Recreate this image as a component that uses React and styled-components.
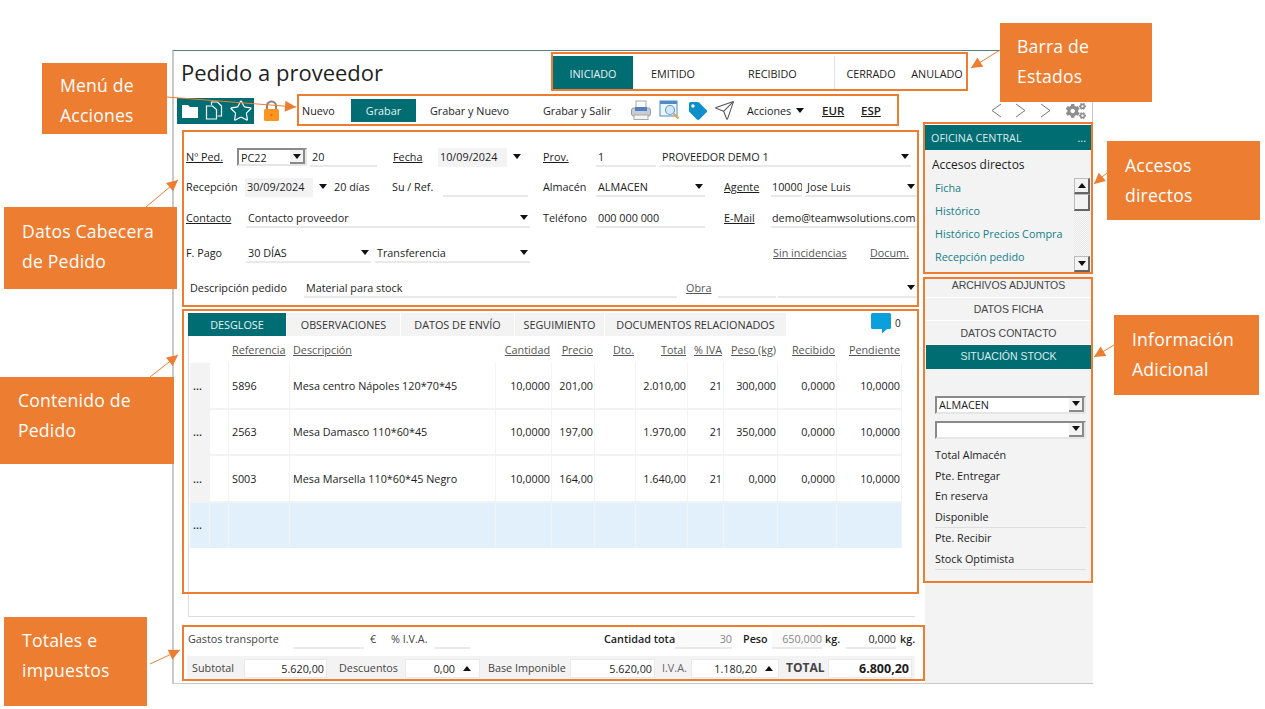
// Pedido a proveedor - annotated slide of the order form
import React from 'react';
import styled, { createGlobalStyle } from 'styled-components';
import { Star, Send } from 'lucide-react';
import { FaTag, FaCogs } from 'react-icons/fa';

const teal = '#006d73';
const orange = '#ed7d31';
const soft = '#f3f3f3';
const line = '#e9e9e9';

const GlobalStyle = createGlobalStyle`
  html, body { margin: 0; padding: 0; background: #fff; }
  body { font-family: 'Open Sans', 'Noto Sans', Arial, sans-serif; color: #1c1c1c; }
  * { box-sizing: border-box; }
`;

// --- Slide canvas ---
const Slide = styled.div`
  position: relative;
  width: 1265px;
  height: 709px;
  overflow: hidden;
  background: #fff;
`;

const Win = styled.div`
  position: absolute;
  left: 172px;
  top: 50px;
  width: 921px;
  height: 634px;
  background: #fff;
  border: 1px solid #c9c9c9;
  border-left-width: 2px;
  border-top: 1px solid #5b7d7d;
  display: flex;
  flex-direction: column;
  font-size: 10.8px;
`;

// --- Title + states ---
const TitleRow = styled.div`
  height: 45px;
  flex: none;
  display: flex;
  align-items: flex-start;
`;
const Title = styled.h1`
  margin: 6px 0 0 7px;
  width: 372px;
  font-size: 22px;
  font-weight: 400;
  line-height: 30px;
  color: #1f1f1f;
`;
const StateTab = styled.div`
  width: ${p => p.$w}px;
  height: 34px;
  margin-top: 5px;
  display: flex;
  align-items: center;
  justify-content: ${p => (p.$left ? 'flex-start' : 'center')};
  padding-left: ${p => p.$left || 0}px;
  background: ${p => (p.$on ? teal : 'transparent')};
  color: ${p => (p.$on ? '#e8f2f2' : '#222')};
  border-left: ${p => (p.$sep ? '1px solid #e3e3e3' : 'none')};
`;

// --- Toolbar ---
const ToolRow = styled.div`
  height: 29px;
  flex: none;
  display: flex;
  align-items: center;
`;
const TealIcons = styled.div`
  width: 77px;
  height: 26px;
  margin-left: 3px;
  background: ${teal};
  display: flex;
  align-items: center;
  justify-content: space-between;
  padding: 0 1px 0 4px;
`;
const LockWrap = styled.div`
  margin: 0 0 0 8px;
  width: 19px;
  height: 24px;
`;
const ToolText = styled.span`
  flex: none;
  width: ${p => p.$w}px;
  margin-left: ${p => p.$ml || 0}px;
  font-weight: ${p => (p.$b ? 600 : 400)};
  font-size: ${p => (p.$b ? 11.5 : 10.8)}px;
  text-decoration: ${p => (p.$u ? 'underline' : 'none')};
  white-space: nowrap;
`;
const ToolBtn = styled.div`
  flex: none;
  width: 65px;
  height: 23px;
  background: ${teal};
  color: #e8f2f2;
  display: flex;
  align-items: center;
  justify-content: center;
`;
const ToolIcon = styled.div`
  flex: none;
  margin-left: ${p => p.$ml || 0}px;
  width: 22px;
  height: 22px;
  display: flex;
  align-items: center;
  justify-content: center;
  & > svg { flex: none; }
`;
const Caret = styled.i`
  flex: none;
  display: inline-block;
  width: 0;
  height: 0;
  margin-left: ${p => p.$ml || 0}px;
  border-left: 4.5px solid transparent;
  border-right: 4.5px solid transparent;
  border-top: ${p => (p.$up ? '0' : '5px solid #111')};
  border-bottom: ${p => (p.$up ? '5px solid #111' : '0')};
`;

// --- Main columns ---
const Main = styled.div`
  flex: 1;
  display: flex;
  min-height: 0;
`;
const LeftCol = styled.div`
  width: 751px;
  flex: none;
  display: flex;
  flex-direction: column;
`;
const RightCol = styled.div`
  flex: 1;
  background: ${soft};
  display: flex;
  flex-direction: column;
`;

// --- Header form ---
const Form = styled.div`
  height: 181px;
  flex: none;
  padding: 23px 0 0 12px;
  display: flex;
  flex-direction: column;
`;
const FormRow = styled.div`
  height: ${p => p.$h}px;
  flex: none;
  display: flex;
  align-items: flex-start;
`;
const Label = styled.span`
  flex: none;
  width: ${p => p.$w}px;
  margin-left: ${p => p.$ml || 0}px;
  line-height: 18px;
  text-decoration: ${p => (p.$u ? 'underline' : 'none')};
  white-space: nowrap;
  color: ${p => p.$c || '#1c1c1c'};
  font-weight: ${p => (p.$b ? 600 : 400)};
`;
const Input = styled.div`
  flex: none;
  width: ${p => p.$w}px;
  margin-left: ${p => p.$ml || 0}px;
  height: 19px;
  padding: 0 ${p => (p.$caret ? 2 : 0)}px 0 ${p => p.$pl ?? 2}px;
  border-bottom: 2px solid ${p => (p.$date ? 'transparent' : line)};
  background: ${p => (p.$date ? soft : p.$shade ? '#fafafa' : 'transparent')};
  color: ${p => (p.$shade ? '#888' : 'inherit')};
  display: flex;
  align-items: center;
  justify-content: ${p => (p.$end ? 'flex-end' : 'space-between')};
  line-height: 17px;
  white-space: nowrap;
  overflow: hidden;
`;
const Combo = styled.div`
  flex: none;
  width: ${p => p.$w}px;
  height: 18px;
  margin-left: ${p => p.$ml || 0}px;
  background: #fff;
  border: 2px solid;
  border-color: #8a8a8a #e6e6e6 #e6e6e6 #8a8a8a;
  display: flex;
  align-items: center;
  justify-content: space-between;
  padding-left: 2px;
  white-space: nowrap;
`;
const ComboBtn = styled.span`
  width: 15px;
  height: 14px;
  background: ${soft};
  border-right: 2px solid #8a8a8a;
  border-bottom: 2px solid #8a8a8a;
  display: flex;
  align-items: center;
  justify-content: center;
`;
const CaretGap = styled(Caret)`
  margin-top: 6px;
  margin-left: 6px;
`;

// --- Tabs + table ---
const Tabs = styled.div`
  height: 23px;
  flex: none;
  margin: 7px 0 0 14px;
  display: flex;
  gap: 1px;
`;
const Tab = styled.div`
  width: ${p => p.$w}px;
  background: ${p => (p.$on ? teal : soft)};
  color: ${p => (p.$on ? '#e8f2f2' : '#333')};
  display: flex;
  align-items: center;
  justify-content: center;
  white-space: nowrap;
`;
const Comment = styled.div`
  margin-left: 84px;
  display: flex;
  align-items: flex-start;
  gap: 4px;
  line-height: 21px;
  font-size: 10px;
`;
const TableFrame = styled.div`
  height: 281px;
  flex: none;
  margin: 0 10px 0 14px;
  border-left: 1px solid #dcdcdc;
  border-bottom: 1px solid #dcdcdc;
  padding: 3px 0 0 1px;
`;
const gridCols = '20px 19px 61px 206px 56px 43px 41px 52px 36px 54px 59px 65px';
const THead = styled.div`
  display: grid;
  grid-template-columns: ${gridCols};
  width: 712px;
  height: 24px;
  padding-bottom: 4px;
  color: #555;
  align-items: center;
`;
const Th = styled.span`
  text-decoration: underline;
  text-align: ${p => (p.$left ? 'left' : 'right')};
  padding: ${p => (p.$left ? '0 0 0 3px' : '0 2px 0 0')};
  white-space: nowrap;
`;
const TRow = styled.div`
  display: grid;
  grid-template-columns: ${gridCols};
  width: 712px;
  height: ${p => (p.$sel ? 45 : 46.5)}px;
  background: ${p => (p.$sel ? '#e2f0fc' : 'transparent')};
`;
const Td = styled.div`
  display: flex;
  align-items: center;
  justify-content: ${p => (p.$left ? 'flex-start' : 'flex-end')};
  padding: ${p => (p.$left ? '0 0 0 3px' : '0 1px 0 0')};
  border-right: 1px solid ${soft};
  border-bottom: 2px solid ${p => (p.$sel ? 'transparent' : soft)};
  white-space: nowrap;
`;
const DotCell = styled(Td)`
  background: ${p => (p.$sel ? 'transparent' : soft)};
  justify-content: center;
  padding: 0 4px 0 0;
  font-weight: 600;
`;

// --- Totals ---
const Totals = styled.div`
  margin: 8px 10px 0 13px;
  display: flex;
  flex-direction: column;
`;
const TotRow = styled.div`
  height: ${p => p.$h}px;
  flex: none;
  display: flex;
  align-items: center;
  padding-bottom: ${p => (p.$bg ? 0 : 3)}px;
  background: ${p => (p.$bg ? soft : 'transparent')};
`;
const NumField = styled.div`
  flex: none;
  width: ${p => p.$w}px;
  margin-left: ${p => p.$ml || 0}px;
  height: 19px;
  padding-right: ${p => p.$pr ?? 2}px;
  display: flex;
  align-items: center;
  justify-content: flex-end;
  gap: 8px;
  background: #fff;
  border: 1px solid ${line};
  font-weight: ${p => (p.$b ? 700 : 400)};
  font-size: ${p => (p.$b ? 12.5 : 10.8)}px;
`;
const TotalLabel = styled(Label)`
  font-weight: 700;
  font-size: 12px;
`;

// --- Right panel ---
const OfficeBar = styled.div`
  height: 25px;
  flex: none;
  background: ${teal};
  color: #dcecec;
  display: flex;
  align-items: center;
  justify-content: space-between;
  padding: 0 7px 0 6px;
`;
const Shortcuts = styled.div`
  height: 124px;
  flex: none;
  display: flex;
`;
const ShortList = styled.div`
  flex: 1;
  padding: 6px 0 0 7px;
`;
const ShortHead = styled.div`
  font-size: 12px;
  line-height: 18px;
  margin-bottom: 2px;
`;
const ShortLink = styled.div`
  color: #14808a;
  height: 23px;
  line-height: 23px;
  padding-left: 3px;
`;
const Scroll = styled.div`
  width: 16px;
  margin: 28px 3px 0 0;
  height: 94px;
  display: flex;
  flex-direction: column;
  background: repeating-conic-gradient(#e8e8e8 0 25%, #f8f8f8 0 50%) 0 0 / 2px 2px;
`;
const ScrollBtn = styled.div`
  height: 16px;
  background: ${soft};
  border: 1px solid #bbb;
  border-right: 2px solid #666;
  border-bottom: 2px solid #666;
  display: flex;
  align-items: center;
  justify-content: center;
`;
const ScrollThumb = styled(ScrollBtn)`
  height: 17px;
  margin-bottom: auto;
`;
const SideTab = styled.div`
  height: 23.7px;
  flex: none;
  margin: 0 2px 0 1px;
  display: flex;
  align-items: center;
  justify-content: center;
  font-family: 'Liberation Sans', Arial, sans-serif;
  font-size: 10.5px;
  border-bottom: 1px solid ${p => (p.$on ? teal : '#fff')};
  background: ${p => (p.$on ? teal : 'transparent')};
  color: ${p => (p.$on ? '#dcecec' : '#444')};
`;
const Stock = styled.div`
  padding: 27px 7px 0 10px;
  display: flex;
  flex-direction: column;
`;
const StockCombo = styled(Combo)`
  width: 151px;
  margin-bottom: 7px;
  &:nth-child(2) { margin-bottom: 6px; }
`;
const StockLabel = styled.div`
  height: 20.8px;
  line-height: 20.8px;
  font-weight: 500;
  border-bottom: ${p => (p.$rule ? '1px solid #dedede' : 'none')};
`;

// --- Orange annotations (lie over the picture) ---
const Note = styled.div`
  position: absolute;
  left: ${p => p.$x}px;
  top: ${p => p.$y}px;
  width: ${p => p.$w}px;
  height: ${p => p.$h}px;
  background: ${orange};
  color: #fff;
  font-size: 17.6px;
  line-height: 30px;
  padding: ${p => p.$pad};
  letter-spacing: 0.2px;
`;
const Mark = styled.div`
  position: absolute;
  left: ${p => p.$x}px;
  top: ${p => p.$y}px;
  width: ${p => p.$w}px;
  height: ${p => p.$h}px;
  border: 2px solid ${orange};
  pointer-events: none;
`;
const Arrows = styled.svg`
  position: absolute;
  left: 0;
  top: 0;
`;

// --- Drawn icons ---
const FolderIcon = () => (
  <svg width="18" height="16" viewBox="0 0 18 16"><path d="M1 2h6l2 2h8v11H1z" fill="#fff" /></svg>
);
const CopyIcon = () => (
  <svg width="18" height="19" viewBox="0 0 18 19" fill="none" stroke="#fff" strokeWidth="1.2">
    <path d="M6.5 4V1h6l4 4v10h-4" />
    <path d="M1.5 5h6l4 3.500V18h-10z" fill={teal} />
  </svg>
);
const LockIcon = () => (
  <svg width="19" height="24" viewBox="0 0 19 24">
    <path d="M5 11V7a4.500 4.500 0 0 1 9 0v4" fill="none" stroke="#8a8378" strokeWidth="2" />
    <rect x="2" y="10" width="15" height="12" rx="1.500" fill="#f9941e" />
    <circle cx="9.500" cy="16" r="1" fill="#c56a06" />
  </svg>
);
const PrinterIcon = () => (
  <svg width="22" height="21" viewBox="0 0 22 21">
    <rect x="6" y="1" width="10" height="8" fill="#fafafa" stroke="#aaa" />
    <rect x="1.500" y="8" width="19" height="8" rx="2" fill="#c9ccd2" stroke="#9a9a9a" />
    <rect x="5" y="7" width="12" height="4" fill="#4f81c4" />
    <rect x="4" y="15" width="14" height="4.500" fill="#f4f4f4" stroke="#aaa" />
  </svg>
);
const PreviewIcon = () => (
  <svg width="22" height="21" viewBox="0 0 22 21">
    <rect x="1" y="1" width="17" height="15" fill="#eef6fd" stroke="#4f8ac9" />
    <rect x="1" y="1" width="17" height="3" fill="#4f8ac9" />
    <circle cx="11" cy="10" r="4.500" fill="#d4eafa" stroke="#6a9ccc" strokeWidth="1.200" />
    <path d="M14.500 13.500l5 5" stroke="#d9a55a" strokeWidth="2.200" />
  </svg>
);
const BubbleIcon = () => (
  <svg width="20" height="21" viewBox="0 0 20 21">
    <path d="M1.500 0h17A1.500 1.500 0 0 1 20 1.500v13a1.500 1.500 0 0 1-1.500 1.500H16l-5 4.500v-4.500H1.500A1.500 1.500 0 0 1 0 14.500v-13A1.500 1.500 0 0 1 1.500 0z" fill="#0b9fdc" />
  </svg>
);
const Chevron = ({ left }) => (
  <svg width="11" height="15" viewBox="0 0 11 15" fill="none" stroke="#777" strokeWidth="1">
    <path d={left ? 'M10 1L1 7.500L10 14' : 'M1 1L10 7.500L1 14'} />
  </svg>
);

// --- Table data ---
const lines = [
  ['5896', 'Mesa centro Nápoles 120*70*45', '10,0000', '201,00', '', '2.010,00', '21', '300,000', '0,0000', '10,0000'],
  ['2563', 'Mesa Damasco 110*60*45', '10,0000', '197,00', '', '1.970,00', '21', '350,000', '0,0000', '10,0000'],
  ['S003', 'Mesa Marsella 110*60*45 Negro', '10,0000', '164,00', '', '1.640,00', '21', '0,000', '0,0000', '10,0000'],
  ['', '', '', '', '', '', '', '', '', ''],
];

const notes = [
  { x: 1000, y: 23, w: 152, h: 79, pad: '8px 0 0 17px', text: ['Barra de', 'Estados'] },
  { x: 42, y: 63, w: 125, h: 71, pad: '7px 0 0 18px', text: ['Menú de', 'Acciones'] },
  { x: 1107, y: 141, w: 153, h: 79, pad: '9px 0 0 18px', text: ['Accesos', 'directos'] },
  { x: 4, y: 207, w: 173, h: 82, pad: '9px 0 0 18px', text: ['Datos Cabecera', 'de Pedido'] },
  { x: 1114, y: 315, w: 145, h: 80, pad: '9px 0 0 18px', text: ['Información', 'Adicional'] },
  { x: 0, y: 377, w: 174, h: 87, pad: '8px 0 0 18px', text: ['Contenido de', 'Pedido'] },
  { x: 4, y: 617, w: 143, h: 89, pad: '8px 0 0 18px', text: ['Totales e', 'impuestos'] },
];

const marks = [
  [551, 52, 417, 39], [297, 94, 602, 32], [182, 130, 737, 177], [182, 309, 737, 285],
  [923, 122, 170, 152], [923, 277, 170, 306], [182, 625, 743, 56],
];

// arrow: line start, tip
const arrows = [
  [1000, 50, 971, 68], [167, 97, 296, 107], [1108, 172, 1094, 184], [146, 207, 178, 180],
  [1114, 345, 1094, 357], [150, 377, 178, 355], [150, 664, 180, 650],
];

function arrowHead(x1, y1, x2, y2) {
  const a = Math.atan2(y2 - y1, x2 - x1);
  const len = 11;
  const w = 5.5;
  const bx = x2 - Math.cos(a) * len;
  const by = y2 - Math.sin(a) * len;
  const px = -Math.sin(a) * w;
  const py = Math.cos(a) * w;
  return `${x2},${y2} ${bx + px},${by + py} ${bx - px},${by - py}`;
}

export default function App() {
  return (
    <>
      <GlobalStyle />
      <Slide>
        <Win>
          <TitleRow>
            <Title>Pedido a proveedor</Title>
            <StateTab $w={80} $on>INICIADO</StateTab>
            <StateTab $w={97} $left={18}>EMITIDO</StateTab>
            <StateTab $w={104} $left={18}>RECIBIDO</StateTab>
            <StateTab $w={73} $sep>CERRADO</StateTab>
            <StateTab $w={60}>ANULADO</StateTab>
          </TitleRow>

          <ToolRow>
            <TealIcons>
              <FolderIcon />
              <CopyIcon />
              <Star size={24} color="#fff" strokeWidth={1.2} />
            </TealIcons>
            <LockWrap><LockIcon /></LockWrap>
            <ToolText $w={49} $ml={21}>Nuevo</ToolText>
            <ToolBtn>Grabar</ToolBtn>
            <ToolText $w={113} $ml={14}>Grabar y Nuevo</ToolText>
            <ToolText $w={87}>Grabar y Salir</ToolText>
            <ToolIcon><PrinterIcon /></ToolIcon>
            <ToolIcon $ml={7}><PreviewIcon /></ToolIcon>
            <ToolIcon $ml={6}><FaTag size={18} color="#0f8fc9" /></ToolIcon>
            <ToolIcon $ml={4}><Send size={21} color="#555" strokeWidth={1.2} /></ToolIcon>
            <ToolText $w={49} $ml={12}>Acciones</ToolText>
            <Caret />
            <ToolText $w={23} $ml={18} $b $u>EUR</ToolText>
            <ToolText $w={21} $ml={16} $b $u>ESP</ToolText>
            <ToolIcon $ml={103}><Chevron left /></ToolIcon>
            <ToolIcon $ml={2}><Chevron /></ToolIcon>
            <ToolIcon $ml={3}><Chevron /></ToolIcon>
            <ToolIcon $ml={9}><FaCogs size={20} color="#8e8e8e" /></ToolIcon>
          </ToolRow>

          <Main>
            <LeftCol>
              <Form>
                <FormRow $h={30}>
                  <Label $w={51} $u>Nº Ped.</Label>
                  <Combo $w={70}>PC22<ComboBtn><Caret /></ComboBtn></Combo>
                  <Input $w={67} $ml={3}>20</Input>
                  <Label $w={45} $ml={16} $u>Fecha</Label>
                  <Input $w={69} $date>10/09/2024</Input>
                  <CaretGap />
                  <Label $w={53} $ml={22} $u>Prov.</Label>
                  <Input $w={60}>1</Input>
                  <Input $w={251} $ml={4} $caret>PROVEEDOR DEMO 1<Caret /></Input>
                </FormRow>
                <FormRow $h={31}>
                  <Label $w={59}>Recepción</Label>
                  <Input $w={68} $date>30/09/2024</Input>
                  <CaretGap />
                  <Label $w={58} $ml={7}>20 días</Label>
                  <Label $w={51}>Su / Ref.</Label>
                  <Input $w={85}></Input>
                  <Label $w={53} $ml={15}>Almacén</Label>
                  <Input $w={109} $caret>ALMACEN<Caret /></Input>
                  <Label $w={47} $ml={19} $u>Agente</Label>
                  <Input $w={31} $pl={1}>10000</Input>
                  <Input $w={112} $ml={3} $caret>Jose Luis<Caret /></Input>
                </FormRow>
                <FormRow $h={35}>
                  <Label $w={60} $u>Contacto</Label>
                  <Input $w={284} $caret>Contacto proveedor<Caret /></Input>
                  <Label $w={53} $ml={13}>Teléfono</Label>
                  <Input $w={109}>000 000 000</Input>
                  <Label $w={47} $ml={19} $u>E-Mail</Label>
                  <Input $w={146} $pl={1}>demo@teamwsolutions.com</Input>
                </FormRow>
                <FormRow $h={35}>
                  <Label $w={60}>F. Pago</Label>
                  <Input $w={125} $caret>30 DÍAS<Caret /></Input>
                  <Input $w={155} $ml={4} $caret>Transferencia<Caret /></Input>
                  <Label $w={75} $ml={243} $u $c="#555">Sin incidencias</Label>
                  <Label $w={40} $ml={22} $u $c="#555">Docum.</Label>
                </FormRow>
                <FormRow $h={27}>
                  <Label $w={113} $ml={4}>Descripción pedido</Label>
                  <Input $w={373} $ml={1}>Material para stock</Input>
                  <Label $w={32} $ml={9} $u $c="#555">Obra</Label>
                  <Input $w={58}></Input>
                  <Input $w={139} $ml={2} $caret><span /><Caret /></Input>
                </FormRow>
              </Form>

              <Tabs>
                <Tab $w={98} $on>DESGLOSE</Tab>
                <Tab $w={113}>OBSERVACIONES</Tab>
                <Tab $w={113}>DATOS DE ENVÍO</Tab>
                <Tab $w={89}>SEGUIMIENTO</Tab>
                <Tab $w={181}>DOCUMENTOS RELACIONADOS</Tab>
                <Comment><BubbleIcon /><span>0</span></Comment>
              </Tabs>

              <TableFrame>
                <THead>
                  <span /><span />
                  <Th $left>Referencia</Th>
                  <Th $left>Descripción</Th>
                  <Th>Cantidad</Th>
                  <Th>Precio</Th>
                  <Th>Dto.</Th>
                  <Th>Total</Th>
                  <Th>% IVA</Th>
                  <Th>Peso (kg)</Th>
                  <Th>Recibido</Th>
                  <Th>Pendiente</Th>
                </THead>
                {lines.map((row, i) => {
                  const sel = i === 3;
                  return (
                    <TRow key={i} $sel={sel}>
                      <DotCell $sel={sel}>...</DotCell>
                      <Td $sel={sel} />
                      {row.map((cell, j) => (
                        <Td key={j} $sel={sel} $left={j < 2}>{cell}</Td>
                      ))}
                    </TRow>
                  );
                })}
              </TableFrame>

              <Totals>
                <TotRow $h={31}>
                  <Label $w={105} $ml={1} $c="#444">Gastos transporte</Label>
                  <Input $w={71}></Input>
                  <Label $w={21} $ml={6} $c="#444">€</Label>
                  <Label $w={44} $c="#444">% I.V.A.</Label>
                  <Input $w={35}></Input>
                  <Label $w={71} $ml={134} $b>Cantidad tota</Label>
                  <Input $w={57} $shade $end>30</Input>
                  <Label $w={29} $ml={11} $b>Peso</Label>
                  <Input $w={50} $shade $end>650,000</Input>
                  <Label $w={21} $ml={3} $b>kg.</Label>
                  <Input $w={50} $end>0,000</Input>
                  <Label $w={16} $ml={4} $b>kg.</Label>
                </TotRow>
                <TotRow $h={24} $bg>
                  <Label $w={52} $ml={5} $c="#444">Subtotal</Label>
                  <NumField $w={83}>5.620,00</NumField>
                  <Label $w={66} $ml={12} $c="#444">Descuentos</Label>
                  <NumField $w={75} $pr={8}>0,00<Caret $up /></NumField>
                  <Label $w={82} $ml={8} $c="#444">Base Imponible</Label>
                  <NumField $w={85}>5.620,00</NumField>
                  <Label $w={29} $ml={7} $c="#666">I.V.A.</Label>
                  <NumField $w={88} $pr={5}>1.180,20<Caret $up /></NumField>
                  <TotalLabel $w={42} $ml={7} $c="#444">TOTAL</TotalLabel>
                  <NumField $w={84} $b>6.800,20</NumField>
                </TotRow>
              </Totals>
            </LeftCol>

            <RightCol>
              <OfficeBar><span>OFICINA CENTRAL</span><span>...</span></OfficeBar>
              <Shortcuts>
                <ShortList>
                  <ShortHead>Accesos directos</ShortHead>
                  <ShortLink>Ficha</ShortLink>
                  <ShortLink>Histórico</ShortLink>
                  <ShortLink>Histórico Precios Compra</ShortLink>
                  <ShortLink>Recepción pedido</ShortLink>
                </ShortList>
                <Scroll>
                  <ScrollBtn><Caret $up /></ScrollBtn>
                  <ScrollThumb />
                  <ScrollBtn><Caret /></ScrollBtn>
                </Scroll>
              </Shortcuts>
              <SideTab>ARCHIVOS ADJUNTOS</SideTab>
              <SideTab>DATOS FICHA</SideTab>
              <SideTab>DATOS CONTACTO</SideTab>
              <SideTab $on>SITUACIÓN STOCK</SideTab>
              <Stock>
                <StockCombo>ALMACEN<ComboBtn><Caret /></ComboBtn></StockCombo>
                <StockCombo><span /><ComboBtn><Caret /></ComboBtn></StockCombo>
                <StockLabel>Total Almacén</StockLabel>
                <StockLabel>Pte. Entregar</StockLabel>
                <StockLabel>En reserva</StockLabel>
                <StockLabel $rule>Disponible</StockLabel>
                <StockLabel>Pte. Recibir</StockLabel>
                <StockLabel $rule>Stock Optimista</StockLabel>
              </Stock>
            </RightCol>
          </Main>
        </Win>

        {marks.map(([x, y, w, h], i) => <Mark key={i} $x={x} $y={y} $w={w} $h={h} />)}

        <Arrows width="1265" height="709">
          {arrows.map(([x1, y1, x2, y2], i) => (
            <g key={i}>
              <line x1={x1} y1={y1} x2={x2} y2={y2} stroke={orange} strokeWidth="1" />
              <polygon points={arrowHead(x1, y1, x2, y2)} fill={orange} />
            </g>
          ))}
        </Arrows>

        {notes.map(n => (
          <Note key={n.text[0]} $x={n.x} $y={n.y} $w={n.w} $h={n.h} $pad={n.pad}>
            {n.text[0]}<br />{n.text[1]}
          </Note>
        ))}
      </Slide>
    </>
  );
}
